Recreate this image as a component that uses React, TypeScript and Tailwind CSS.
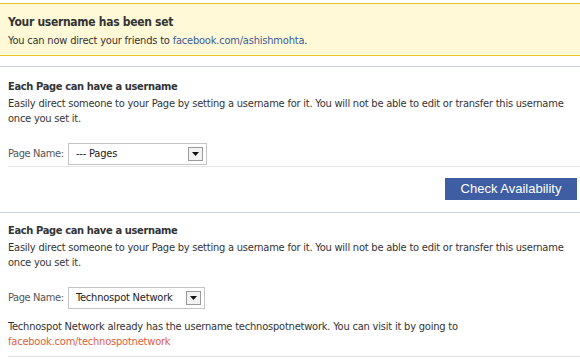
import React from "react";

const font = { fontFamily: '"DejaVu Sans Condensed", "DejaVu Sans", sans-serif' };

function Select({ label, width }: { label: string; width: string }) {
  return (
    <div className={`flex items-center h-[22px] border border-[#c4c4c4] bg-white pl-[7px] pr-[3px] ${width}`}>
      <span className="flex-1 text-[11px] text-[#222] tracking-[-0.2px] whitespace-nowrap">{label}</span>
      <span className="flex items-center justify-center w-[15px] h-[14px] border border-[#9a9a9a] bg-[#f2f2f2]">
        <svg width="7" height="4" viewBox="0 0 7 4">
          <polygon points="0,0 7,0 3.5,4" fill="#111" />
        </svg>
      </span>
    </div>
  );
}

function Section({ label, width, top }: { label: string; width: string; top: string }) {
  return (
    <div className="px-[8px]">
      <div className={`text-[11px] font-bold text-[#333] leading-[14px] tracking-[-0.35px] ${top}`}>Each Page can have a username</div>
      <div className="text-[11px] text-[#333] leading-[15px] mt-[2px] tracking-[-0.22px]">
        Easily direct someone to your Page by setting a username for it. You will not be able to edit or transfer this username once you set it.
      </div>
      <div className="flex items-center mt-[17px]">
        <span className="w-[60px] text-[11px] text-[#555] tracking-[-0.4px] whitespace-nowrap">Page Name:</span>
        <Select label={label} width={width} />
      </div>
    </div>
  );
}

export default function App() {
  return (
    <div className="w-[580px] h-[359px] bg-white overflow-hidden" style={font}>
      <div className="mt-[3px] h-[53px] bg-[#fff9d7] border-y border-[#e2c822] px-[8px] pt-[10px]">
        <div className="text-[12px] font-bold text-[#333] leading-[16px] tracking-[-0.3px]">Your username has been set</div>
        <div className="text-[11px] text-[#333] leading-[14px] mt-[4px] tracking-[-0.2px]">
          You can now direct your friends to <span className="text-[#3b5998]">facebook.com/ashishmohta</span>.
        </div>
      </div>
      <div className="mt-[10px] border-t border-[#ccd0d8]" />
      <Section label="--- Pages" width="w-[139px]" top="mt-[13px]" />
      <div className="ml-[8px] mt-[1px] border-t border-[#e5e5e5]" />
      <div className="flex justify-end pr-[3px] mt-[11px]">
        <div className="w-[132px] h-[22px] bg-[#3e5da3] text-white text-[13px] flex items-center justify-center" style={{ fontFamily: '"Liberation Sans", Arial, sans-serif' }}>
          Check Availability
        </div>
      </div>
      <div className="mt-[12px] border-t border-[#ccd0d8]" />
      <Section label="Technospot Network" width="w-[137px]" top="mt-[11px]" />
      <div className="px-[8px] mt-[10px] text-[11px] leading-[15px] text-[#333] tracking-[-0.2px]">
        Technospot Network already has the username technospotnetwork. You can visit it by going to
        <br />
        <span className="text-[#e0613d]">facebook.com/technospotnetwork</span>
      </div>
      <div className="ml-[8px] mt-[7px] border-t border-[#e0e0e0]" />
    </div>
  );
}
